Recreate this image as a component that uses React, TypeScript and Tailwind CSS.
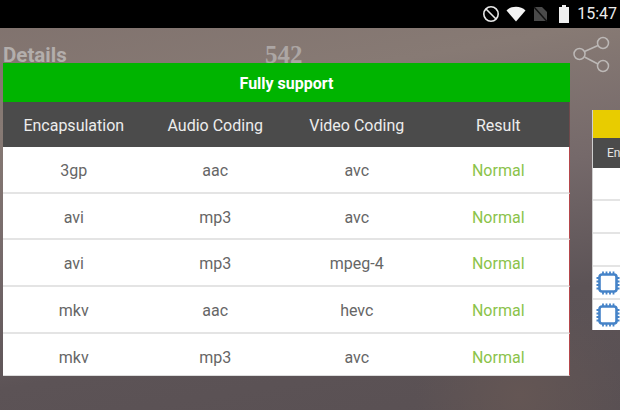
const rows = [
  ["3gp", "aac", "avc"],
  ["avi", "mp3", "avc"],
  ["avi", "mp3", "mpeg-4"],
  ["mkv", "aac", "hevc"],
  ["mkv", "mp3", "avc"],
];
const heads = ["Encapsulation", "Audio Coding", "Video Coding", "Result"];

function Chip() {
  return (
    <svg width="24" height="24" viewBox="0 0 24 24" fill="none" stroke="#4583c8" strokeWidth="2">
      <rect x="3.5" y="3.5" width="17" height="17" rx="2.5" strokeWidth="2.6" />
      <path d="M7 0.5v3M10.5 0.5v3M14 0.5v3M17.5 0.5v3M7 20.5v3M10.5 20.5v3M14 20.5v3M17.5 20.5v3M0.5 7h3M0.5 10.5h3M0.5 14h3M0.5 17.5h3M20.5 7h3M20.5 10.5h3M20.5 14h3M20.5 17.5h3" strokeWidth="1.8" />
    </svg>
  );
}

export default function App() {
  return (
    <div className="w-[620px] h-[410px] overflow-hidden flex flex-col font-['Roboto',sans-serif] bg-[radial-gradient(circle_at_520px_395px,#645654_0%,transparent_16%),linear-gradient(170deg,#7f716d_0%,#877a74_25%,#75696a_50%,#5c5356_75%,#595053_100%)]">
      <div className="h-[28px] shrink-0 bg-black flex items-center justify-end pr-[3px] text-white">
        <svg width="18" height="18" viewBox="0 0 18 18" fill="none" stroke="#e8e8e8" strokeWidth="1.6" className="mr-[6px]">
          <circle cx="9" cy="9" r="7.2" />
          <path d="M4 4l10 10" />
        </svg>
        <svg width="20" height="16" viewBox="0 0 20 16" className="mr-[7px]">
          <path d="M0.5 4.5C3 2 6.2 0.8 10 0.8s7 1.2 9.5 3.7L10 15.5z" fill="#f4f4f4" />
        </svg>
        <svg width="15" height="16" viewBox="0 0 15 16" className="mr-[10px]">
          <path d="M1 1h8l5 5v9H1z" fill="#4a4a4a" />
          <path d="M1 1l13 14.5" stroke="#111" strokeWidth="1.4" />
        </svg>
        <svg width="12" height="18" viewBox="0 0 12 18" className="mr-[7px]">
          <path d="M4 0h4v2h3v16H1V2h3z" fill="#efefef" />
        </svg>
        <span className="text-[16px] leading-none text-[#ececec]">15:47</span>
      </div>

      <div className="h-[35px] shrink-0 flex items-start relative">
        <span className="absolute left-[3px] top-[15px] text-[20.5px] leading-[24px] font-bold text-[#b3aeac]">Details</span>
        <span className="absolute left-[265px] top-[14px] text-[25px] leading-[26px] font-bold text-[#aca6a4] font-['Liberation_Serif',serif]">542</span>
        <svg width="40" height="40" viewBox="0 0 40 40" fill="none" stroke="#bcb8b6" strokeWidth="1.5" className="absolute left-[572px] top-[7px]">
          <circle cx="7.5" cy="19" r="5.5" />
          <circle cx="31" cy="8" r="5.5" />
          <circle cx="31" cy="31" r="5.5" />
          <path d="M12.5 16.5l13.5-6M12.5 22l13.5 7" />
        </svg>
      </div>

      <div className="flex items-start pl-[3px] gap-[22px] relative">
        <div className="w-[567px] shrink-0 bg-white">
          <div className="h-[39px] pt-[2px] bg-[#00b400] flex items-center justify-center text-white text-[16px] font-bold">Fully support</div>
          <div className="h-[45px] pt-[2px] bg-[#4b4b4b] grid grid-cols-4 items-center text-center text-[16px] text-[#ededed] border-r border-[#6e4a4c]">
            {heads.map((h) => (
              <span key={h}>{h}</span>
            ))}
          </div>
          {rows.map((r, i) => (
            <div key={i} className={`grid grid-cols-4 items-start pt-[14px] text-center text-[16px] leading-[19px] text-[#666666] border-r border-[#b5484c] ${i < 4 ? "h-[46.67px] border-b-2 border-b-[#e4e4e4]" : "h-[42.33px] border-b border-b-[#dddddd]"}`}>
              {r.map((c, j) => (
                <span key={j}>{c}</span>
              ))}
              <span className="text-[#8bc34a]">Normal</span>
            </div>
          ))}
        </div>

        <div className="mt-[47px] w-[100px] shrink-0 bg-white border-l border-[#cfcfcf]">
          <div className="h-[28px] bg-[#e8cc00]" />
          <div className="h-[30px] bg-[#4b4b4b] flex items-center pl-[14px] text-[12px] text-[#e6e6e6]">Encapsulation</div>
          <div className="h-[33px] border-b-2 border-[#e4e4e4]" />
          <div className="h-[33px] border-b-2 border-[#e4e4e4]" />
          <div className="h-[33px] border-b-2 border-[#e4e4e4]" />
          <div className="h-[33px] border-b-2 border-[#e4e4e4] flex items-center pl-[3px]"><Chip /></div>
          <div className="h-[30px] flex items-center pl-[3px]"><Chip /></div>
        </div>
      </div>
    </div>
  );
}
